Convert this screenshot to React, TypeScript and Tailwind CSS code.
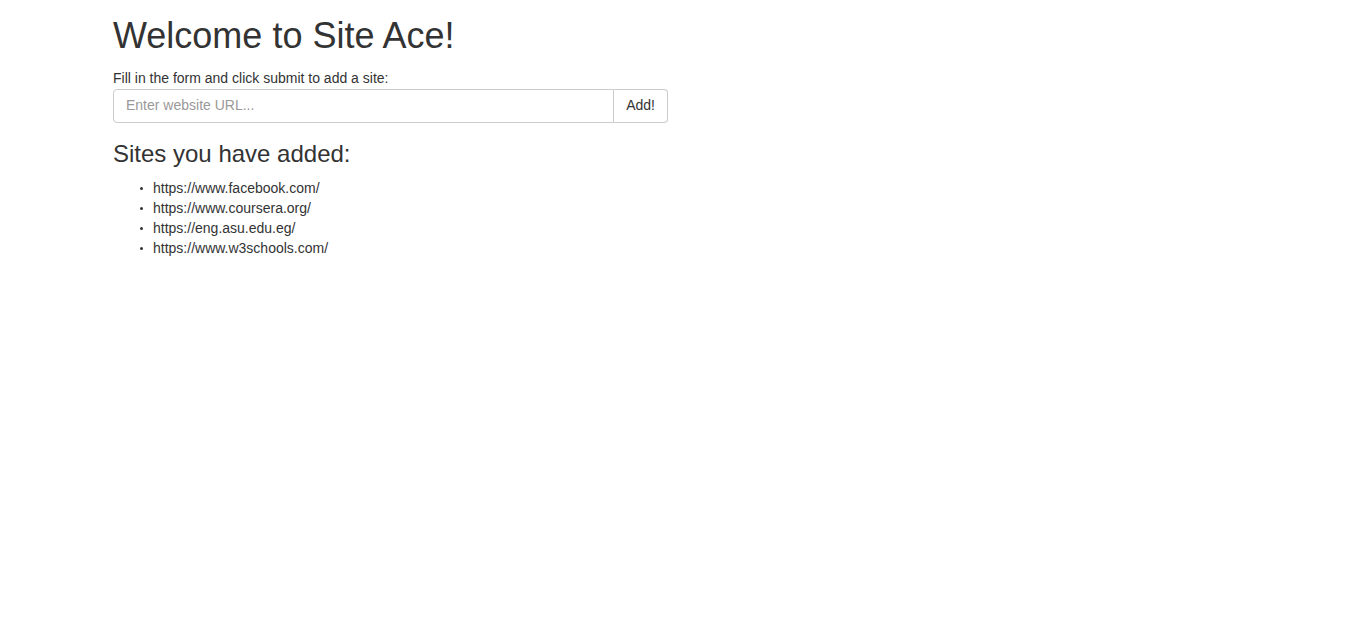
import { useState } from 'react';

const initialSites = [
  'https://www.facebook.com/',
  'https://www.coursera.org/',
  'https://eng.asu.edu.eg/',
  'https://www.w3schools.com/',
];

export default function App() {
  const [sites, setSites] = useState<string[]>(initialSites);
  const [url, setUrl] = useState('');

  const handleSubmit = (e: React.FormEvent) => {
    e.preventDefault();
    if (url.trim()) {
      setSites(prev => [...prev, url.trim()]);
      setUrl('');
    }
  };

  return (
    <div className="min-h-screen bg-white text-[#333] text-[14px] leading-[20px] font-['Liberation_Sans',Arial,sans-serif]">
      <div className="max-w-[1170px] mx-auto px-[15px]">
        <h1 className="text-[36px] leading-[1.1] mt-[16px] mb-[12px] font-normal">
          Welcome to Site Ace!
        </h1>

        <div className="w-[555px]">
          <form onSubmit={handleSubmit}>
            <label htmlFor="url" className="block mb-[1px]">
              Fill in the form and click submit to add a site:
            </label>
            <div className="flex">
              <input
                id="url"
                type="text"
                value={url}
                onChange={e => setUrl(e.target.value)}
                placeholder="Enter website URL..."
                className="flex-1 h-[34px] px-3 pt-[5px] pb-[7px] border border-[#ccc] rounded-l-[4px] outline-none placeholder:text-[#999] text-[#555]"
              />
              <button
                type="submit"
                className="h-[34px] px-3 pt-[5px] pb-[7px] border border-l-0 border-[#ccc] rounded-r-[4px] bg-white text-[#333]"
              >
                Add!
              </button>
            </div>
          </form>
        </div>

        <h3 className="text-[24px] leading-[1.1] mt-[18px] mb-[11px] font-normal">
          Sites you have added:
        </h3>
        <ul className="pl-[40px]">
          {sites.map(site => (
            <li
              key={site}
              className="relative before:content-[''] before:absolute before:left-[-13px] before:top-[9px] before:w-[3px] before:h-[3px] before:rounded-full before:bg-[#333]"
            >
              {site}
            </li>
          ))}
        </ul>
      </div>
    </div>
  );
}
